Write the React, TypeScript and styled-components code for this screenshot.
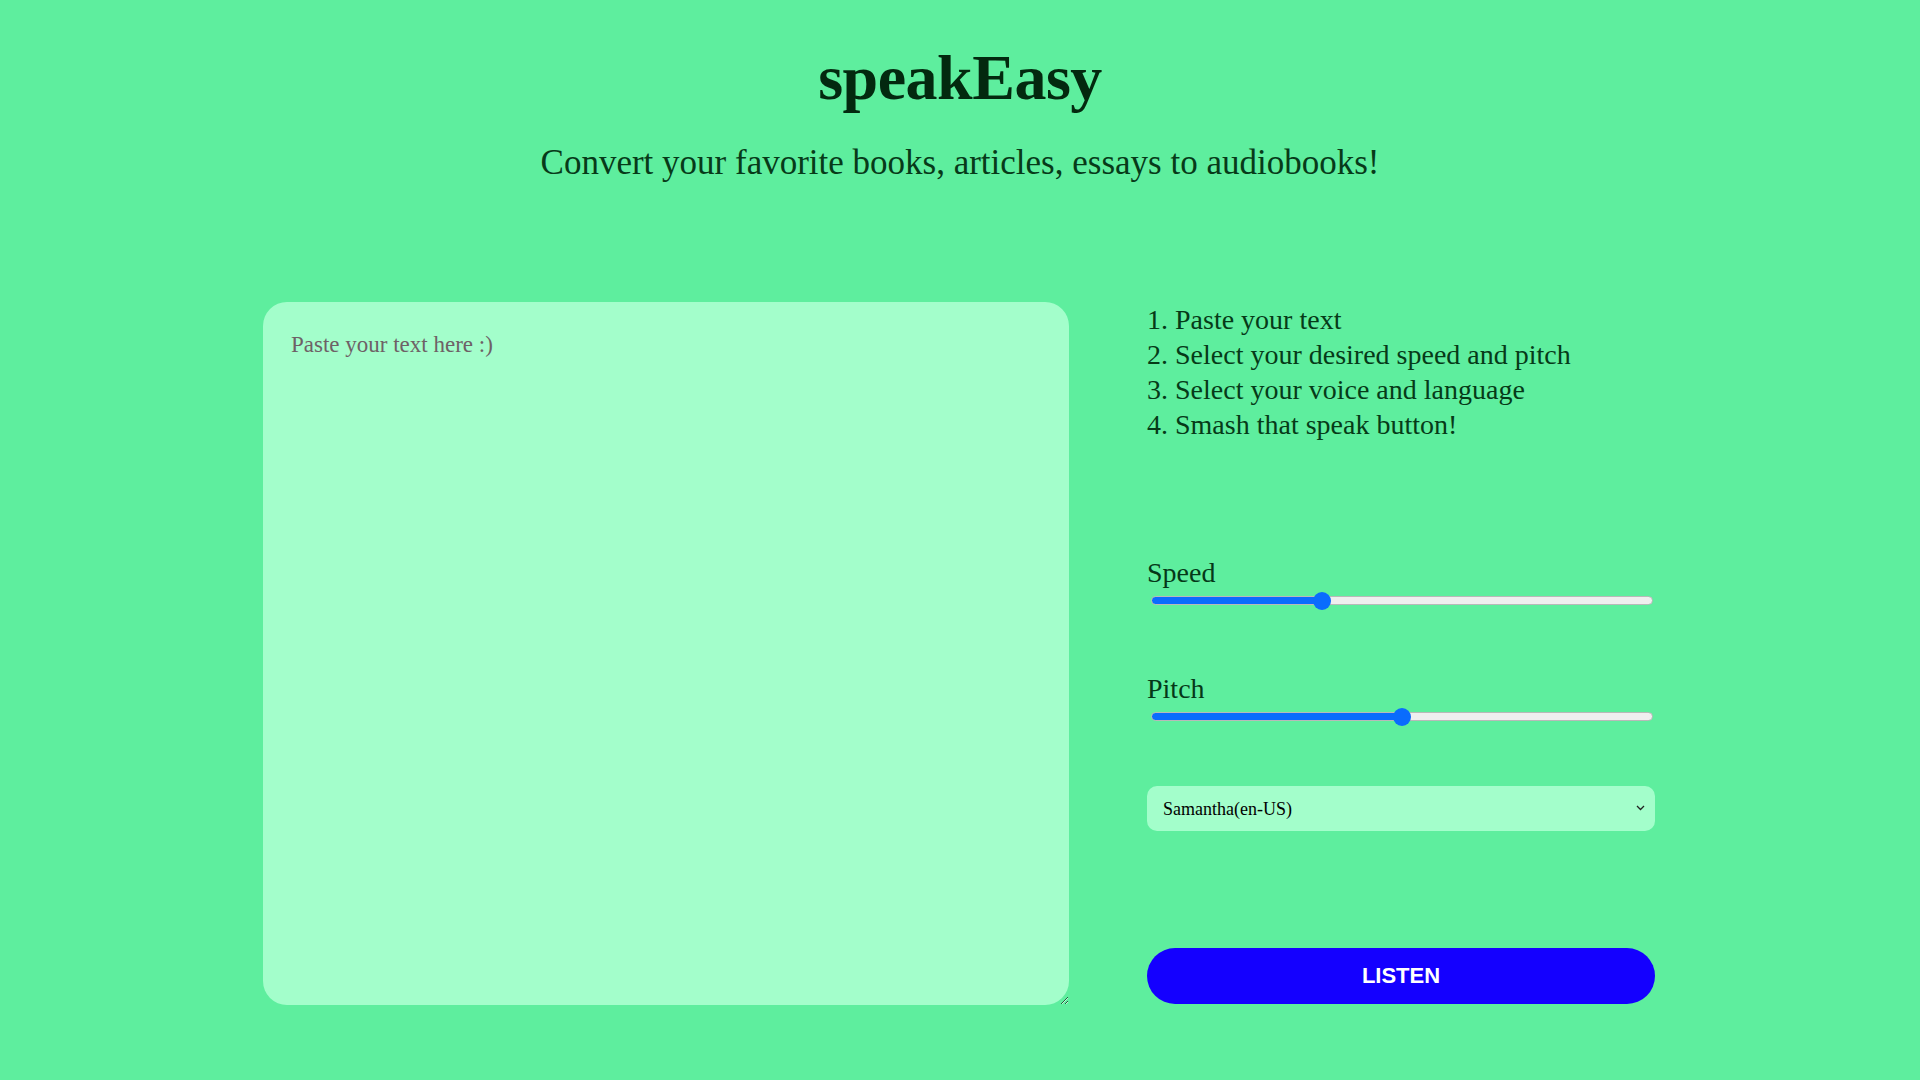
import React, { useState } from "react";
import styled, { createGlobalStyle } from "styled-components";

const GlobalStyle = createGlobalStyle`
  html, body {
    margin: 0;
    padding: 0;
    background: #5eee9e;
  }
  body {
    font-family: "Liberation Serif", "DejaVu Serif", serif;
    color: #04331a;
  }
`;

const Page = styled.div`
  min-height: 1080px;
  display: flex;
  flex-direction: column;
  align-items: center;
  background: #5eee9e;
`;

const Title = styled.h1`
  margin: 39px 0 0;
  font-family: "Liberation Serif", serif;
  font-weight: 700;
  font-size: 64px;
  line-height: 77px;
  color: #03290f;
  letter-spacing: -0.5px;
`;

const Subtitle = styled.p`
  margin: 27px 0 0;
  font-size: 35px;
  line-height: 40px;
  color: #073a19;
`;

const Main = styled.main`
  display: flex;
  justify-content: center;
  gap: 78px;
  margin-top: 119px;
  padding-right: 2px;
`;

const TextArea = styled.textarea`
  box-sizing: border-box;
  width: 806px;
  height: 703px;
  border: none;
  outline: none;
  border-radius: 24px;
  background: #a3fecb;
  padding: 30px 28px;
  font-family: "Liberation Serif", serif;
  font-size: 23px;
  color: #1a1a1a;
  &::placeholder {
    color: #6e6166;
  }
`;

const Side = styled.section`
  width: 508px;
  display: flex;
  flex-direction: column;
`;

const Steps = styled.ol`
  margin: 0;
  padding: 0;
  list-style: none;
  font-size: 28px;
  line-height: 35px;
  color: #063a18;
`;

const Label = styled.label<{ $top: number }>`
  display: block;
  margin-top: ${(p) => p.$top}px;
  font-size: 28px;
  line-height: 32px;
  color: #053818;
`;

const Range = styled.input`
  -webkit-appearance: none;
  appearance: none;
  box-sizing: border-box;
  width: 502px;
  height: 9px;
  margin: 7px 0 6px 4px;
  border-radius: 5px;
  border: 1px solid #b9b9b9;
  outline: none;
  &::-webkit-slider-thumb {
    -webkit-appearance: none;
    appearance: none;
    width: 18px;
    height: 18px;
    border-radius: 50%;
    background: #0a6cfd;
    border: none;
    cursor: pointer;
  }
`;

const SelectWrap = styled.div`
  position: relative;
  margin-top: 59px;
`;

const Select = styled.select`
  -webkit-appearance: none;
  appearance: none;
  box-sizing: border-box;
  width: 508px;
  height: 45px;
  border: none;
  outline: none;
  border-radius: 10px;
  background: #a3fecb;
  padding: 0 16px;
  font-family: "Liberation Serif", serif;
  font-size: 18px;
  color: #000;
`;

const Chevron = styled.svg`
  position: absolute;
  right: 10px;
  top: 19px;
  pointer-events: none;
`;

const Button = styled.button`
  margin-top: 117px;
  width: 508px;
  height: 56px;
  border: none;
  border-radius: 28px;
  background: #1400ff;
  color: #fff;
  font-family: "Liberation Sans", Arial, sans-serif;
  font-weight: 700;
  font-size: 22px;
  cursor: pointer;
`;

function fill(value: number, min: number, max: number) {
  const pct = ((value - min) / (max - min)) * 100;
  return {
    background: `linear-gradient(to right, #0a6cfd 0%, #0a6cfd ${pct}%, #efefef ${pct}%, #efefef 100%)`,
  };
}

export default function App() {
  const [speed, setSpeed] = useState(1);
  const [pitch, setPitch] = useState(1);
  return (
    <Page>
      <GlobalStyle />
      <Title>speakEasy</Title>
      <Subtitle>Convert your favorite books, articles, essays to audiobooks!</Subtitle>
      <Main>
        <TextArea placeholder="Paste your text here :)" />
        <Side>
          <Steps>
            <li>1. Paste your text</li>
            <li>2. Select your desired speed and pitch</li>
            <li>3. Select your voice and language</li>
            <li>4. Smash that speak button!</li>
          </Steps>
          <Label $top={115} htmlFor="speed">Speed</Label>
          <Range
            id="speed"
            type="range"
            min={0.5}
            max={2}
            step={0.1}
            value={speed}
            onChange={(e) => setSpeed(parseFloat(e.target.value))}
            style={fill(speed, 0.5, 2)}
          />
          <Label $top={62} htmlFor="pitch">Pitch</Label>
          <Range
            id="pitch"
            type="range"
            min={0}
            max={2}
            step={0.1}
            value={pitch}
            onChange={(e) => setPitch(parseFloat(e.target.value))}
            style={fill(pitch, 0, 2)}
          />
          <SelectWrap>
            <Select defaultValue="Samantha">
              <option value="Samantha">Samantha(en-US)</option>
            </Select>
            <Chevron width="9" height="6" viewBox="0 0 9 6">
              <path d="M1 1l3.5 3.5L8 1" fill="none" stroke="#222" strokeWidth="1.3" />
            </Chevron>
          </SelectWrap>
          <Button>LISTEN</Button>
        </Side>
      </Main>
    </Page>
  );
}
